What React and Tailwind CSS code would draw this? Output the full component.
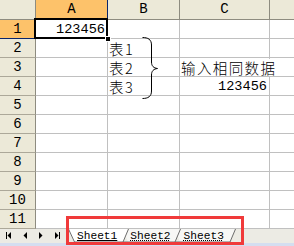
const mono = { fontFamily: '"Liberation Mono", "DejaVu Sans Mono", monospace' };

const rows = [1, 2, 3, 4, 5, 6, 7, 8, 9, 10, 11];

const cellData = {
  1: { A: { text: '123456', num: true } },
  2: { B: { text: '表1' } },
  3: { B: { text: '表2' }, C: { text: '输入相同数据', overflow: true } },
  4: { B: { text: '表3' }, C: { text: '123456', num: true } },
};

const Cell = ({ data, width, selected }) => (
  <div
    className={`relative h-[19px] shrink-0 border-r border-b border-[#c0c0c0] bg-white ${width}`}
  >
    {data && data.num && (
      <div
        className="absolute right-[2px] top-0 h-[18px] leading-[19px] text-[13.6px] text-black"
        style={mono}
      >
        {data.text}
      </div>
    )}
    {data && !data.num && (
      <div
        className={`absolute left-[1px] top-[1px] h-[17px] leading-[17px] text-[14.5px] tracking-[1.4px] text-black whitespace-nowrap ${
          data.overflow ? 'z-10 bg-white' : ''
        }`}
        style={{ fontFamily: '"Noto Sans CJK SC", "Liberation Mono", sans-serif', fontWeight: 300 }}
      >
        {data.text}
      </div>
    )}
    {selected && (
      <>
        <div className="absolute -left-[2px] -top-[2px] -right-[1px] -bottom-[1px] border-2 border-black z-20" />
        <div className="absolute -right-[4px] -bottom-[4px] w-[6px] h-[6px] bg-black border border-white z-30" />
      </>
    )}
  </div>
);

const Brace = () => (
  <svg className="absolute left-0 top-0 pointer-events-none z-10" width="294" height="229">
    <path
      d="M142.5 37.5 C148 37.5 151.5 39.5 151.5 45 L151.5 62 C151.5 66 153.5 68 157.5 68.5 C153.5 69 151.5 71 151.5 75 L151.5 91 C151.5 96.5 148 98.5 142.5 98.5"
      fill="none"
      stroke="#000"
      strokeWidth="1"
    />
  </svg>
);

const NavButtons = () => (
  <svg width="68" height="14" className="shrink-0">
    <rect x="6" y="3" width="1" height="7" fill="#000" />
    <path d="M11 3 L7.5 6.5 L11 10 Z" fill="#000" />
    <path d="M27 3 L23.5 6.5 L27 10 Z" fill="#000" />
    <path d="M39 3 L42.5 6.5 L39 10 Z" fill="#000" />
    <path d="M55 3 L58.5 6.5 L55 10 Z" fill="#000" />
    <rect x="59" y="3" width="1" height="7" fill="#000" />
  </svg>
);

const TabOutlines = () => (
  <svg className="absolute left-0 top-0 pointer-events-none" width="294" height="14">
    <path d="M180 0 L175 13 L128 13 L123 0 Z" fill="#f7f7f5" />
    <path d="M235 0 L230 13 L180 13 L175 0 Z" fill="#f7f7f5" />
    <path d="M68 0 L74 13 L123 13 L128 0 Z" fill="#fff" />
    <path d="M68.5 0 L74.5 13 L123 13 L128.5 0" fill="none" stroke="#6d6d6d" strokeWidth="1" />
    <path d="M123 13 L175 13 L180.5 0" fill="none" stroke="#6d6d6d" strokeWidth="1" />
    <path d="M175 13 L230 13 L235.5 0" fill="none" stroke="#6d6d6d" strokeWidth="1" />
  </svg>
);

export default function App() {
  return (
    <div className="w-[294px] h-[246px] overflow-hidden bg-white relative" style={mono}>
      <div className="relative">
        {/* column headers */}
        <div className="flex h-[20px]">
          <div className="w-[36px] shrink-0 bg-[#ece9d8] border-r border-b border-[#8e8c80]" />
          <div className="w-[72px] shrink-0 bg-[#fdc26a] border-r border-b border-[#0a246a] flex items-center justify-center text-[14px] text-black">
            A
          </div>
          <div className="w-[72px] shrink-0 bg-[#ece9d8] border-r border-b border-[#8e8c80] flex items-center justify-center text-[14px] text-black">
            B
          </div>
          <div className="w-[90px] shrink-0 bg-[#ece9d8] border-r border-b border-[#8e8c80] flex items-center justify-center text-[14px] text-black">
            C
          </div>
          <div className="flex-1 bg-[#ece9d8] border-b border-[#8e8c80]" />
        </div>

        {rows.map((r) => {
          const d = cellData[r] || {};
          return (
            <div key={r} className="flex h-[19px]">
              <div
                className={`w-[36px] h-[19px] shrink-0 border-r flex items-center justify-center text-[14px] text-black ${
                  r === 1
                    ? 'bg-[#fdc26a] border-b border-b-[#0a246a] border-r-[#8e8c80]'
                    : 'bg-[#ece9d8] border-b border-[#aca899] border-r-[#8e8c80]'
                }`}
              >
                {r}
              </div>
              <Cell data={d.A} width="w-[72px]" selected={r === 1} />
              <Cell data={d.B} width="w-[72px]" />
              <Cell data={d.C} width="w-[90px]" />
              <div className="flex-1 h-[19px] border-b border-[#c0c0c0] bg-white" />
            </div>
          );
        })}
        <Brace />
      </div>

      {/* sheet tabs */}
      <div className="relative flex h-[14px] bg-[#ecebe4]">
        <TabOutlines />
        <NavButtons />
        <div className="relative flex gap-[13px] pl-[9px] text-[11.2px] leading-[15px] text-black" style={mono}>
          <span className="underline underline-offset-[1px]">Sheet1</span>
          <span className="underline decoration-dotted underline-offset-[1px]">Sheet2</span>
          <span className="underline decoration-dotted underline-offset-[1px]">Sheet3</span>
        </div>
      </div>
      <div className="h-[3px] bg-[#d4def0]" />

      {/* highlight box */}
      <div className="absolute left-[66px] top-[216px] w-[178px] h-[29px] border-[3px] border-[#f03a3a] z-40" />
    </div>
  );
}
